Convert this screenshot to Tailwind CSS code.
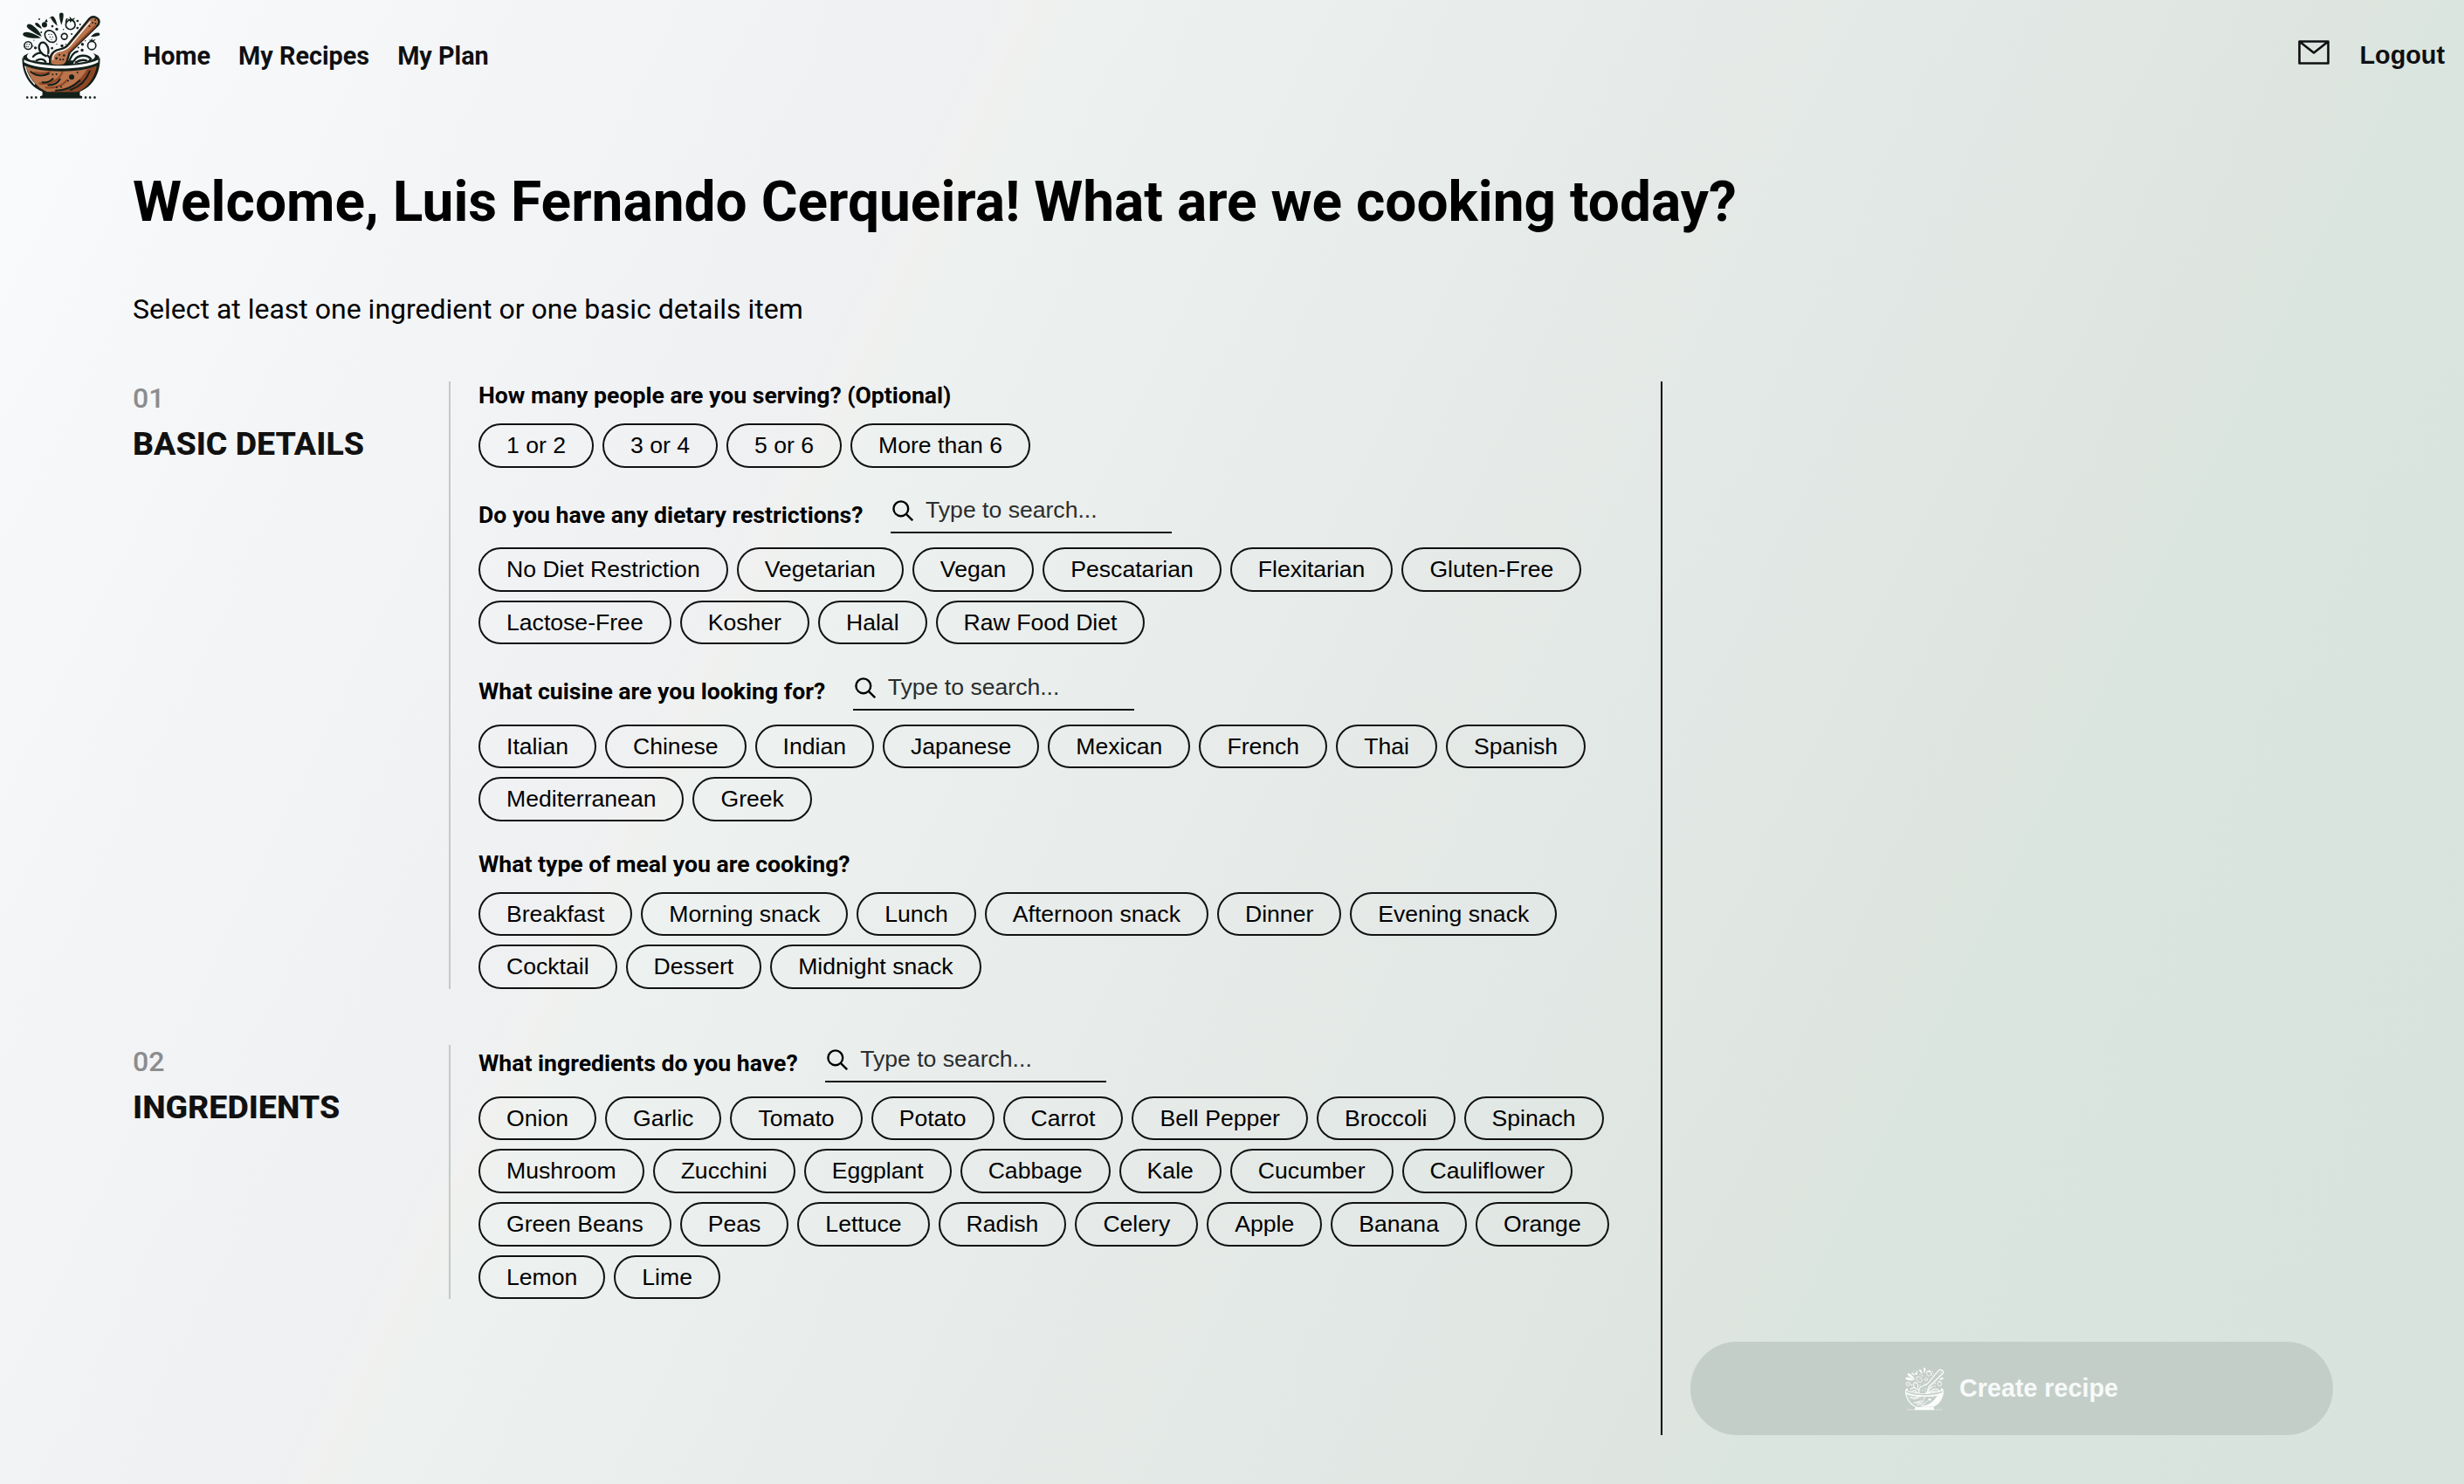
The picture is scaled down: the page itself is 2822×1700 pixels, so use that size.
<!DOCTYPE html>
<html lang="en">
<head>
    <meta charset="utf-8"/>
    <meta content="width=device-width, initial-scale=1" name="viewport"/>
    <title>Recipes | Home</title>
    <script src="https://cdn.jsdelivr.net/npm/@tailwindcss/browser@4"></script>
</head>
<body class="font-['Roboto',sans-serif] text-black">
<!-- bowl artwork, shared by the header and the button -->
<svg class="hidden">
    <symbol id="bowl" viewBox="40 25 280 302">
        <g fill="var(--ink)">
            <!-- splashes -->
            <path d="M174 36c0-9 14-9 14 0 0 13-3 24-7 36-4-12-7-23-7-36z"/>
            <path d="M145 44c4-5 9-2 12 3 6 9 8 17 10 28-9-7-15-14-20-22-2-4-3-6-2-9z"/>
            <path d="M198 50c3-3 5 0 3 4l-6 14c-1-8 0-13 3-18z"/>
            <path d="M91 66c4-4 9-1 15 5 4 4 6 8 8 14-8-4-14-7-19-11-3-3-5-5-4-8z"/>
            <path d="M64 71c5-6 14-2 22 5 13 10 21 20 28 36-17-8-30-15-42-25-7-5-12-11-8-16z"/>
            <path d="M49 103c2-8 14-9 26-5 12 3 25 10 36 18-18 2-33 2-47-2-9-2-16-6-15-11z"/>
            <path d="M282 112c6-9 16-15 25-14 7 1 8 9 0 11-8 3-16 4-25 3z"/>
            <circle cx="123" cy="71" r="9"/>
            <path d="M124 63c0-6 3-10 8-12-1 4 0 7 3 9-3 2-7 3-11 3z"/>
            <!-- dots -->
            <circle cx="105" cy="52" r="3"/><circle cx="150" cy="76" r="4"/><circle cx="165" cy="86" r="5"/>
            <circle cx="142" cy="47" r="2"/><circle cx="236" cy="58" r="4"/><circle cx="245" cy="70" r="3"/><circle cx="236" cy="82" r="4"/>
            <circle cx="188" cy="87" r="2"/><circle cx="112" cy="97" r="3"/><circle cx="216" cy="103" r="3"/>
            <circle cx="87" cy="124" r="2"/><circle cx="92" cy="150" r="5"/><circle cx="84" cy="144" r="2"/>
            <circle cx="149" cy="151" r="4"/><circle cx="165" cy="137" r="2"/><circle cx="183" cy="143" r="5"/>
            <circle cx="196" cy="138" r="2"/><circle cx="253" cy="138" r="5"/><circle cx="252" cy="158" r="5"/>
            <circle cx="239" cy="149" r="3"/><circle cx="263" cy="126" r="2"/><circle cx="240" cy="130" r="2"/>
            <circle cx="64" cy="320" r="4"/><circle cx="79" cy="320" r="4"/><circle cx="94" cy="320" r="4"/>
            <circle cx="264" cy="320" r="4"/><circle cx="279" cy="320" r="4"/><circle cx="295" cy="320" r="4"/>
            <path d="M210 58l-11-8 11 2-1-10 8 9 12-4-7 8 7 5-12-2-6 6z"/>
            <path d="M281 127l-7-4 8 0 4-6 1 7 12-3-8 7z"/>
        </g>
        <!-- fruit and vegetable outlines -->
        <g fill="none" stroke="var(--ink)" stroke-width="5" stroke-linecap="round">
            <circle cx="212" cy="71" r="16"/>
            <path d="M130 93c11-6 25 0 30 12 6 13 5 22-4 25-12 3-24-4-29-14-4-9-4-18 3-23z"/>
            <circle cx="191" cy="111" r="10"/>
            <circle cx="67" cy="142" r="13"/>
            <circle cx="285" cy="142" r="14"/>
        </g>
        <g fill="var(--ink)">
            <circle cx="138" cy="104" r="2"/><circle cx="147" cy="104" r="2"/><circle cx="142" cy="113" r="2"/>
            <circle cx="151" cy="113" r="2"/><circle cx="147" cy="121" r="2"/><circle cx="63" cy="138" r="2"/>
            <circle cx="71" cy="138" r="2"/><circle cx="67" cy="146" r="2"/><circle cx="61" cy="146" r="2"/>
        </g>
        <!-- back of the bowl and its contents -->
        <path fill="var(--ink)" d="M70 168l-16 8c-7 5-5 12 2 18 35 26 213 26 248 0 7-6 9-13 2-18l-17-8c14 12 6 20-9 25H79c-15-5-23-13-9-25z"/>
        <g fill="var(--paper)" stroke="var(--ink)" stroke-width="7" stroke-linecap="round">
            <path d="M84 180c12-16 42-20 58 6v20l-50-6"/>
            <path d="M128 178c-26-12-28-34-18-44 12-10 30 10 26 34"/>
            <path d="M206 202c6-22 14-36 30-40M224 194c14-22 44-22 58-6l-10 12-50 8"/>
            <path d="M95 194c12-8 26-6 32 4M230 200c12-8 26-10 38-6"/>
        </g>
        <!-- spoon -->
        <path fill="var(--wood)" stroke="var(--ink)" stroke-width="7" stroke-linejoin="round" d="M144 208c-8-28 6-48 28-52 14-2 24-6 33-18l72-88c14-14 38 0 32 16l-2 5-94 91c-8 9-8 18-11 28-3 12-10 20-20 20-12 2-28 2-38-2z"/>
        <path fill="none" stroke="var(--paper)" stroke-width="4" stroke-linecap="round" d="M152 190c-1-16 8-26 24-29 16-3 26-8 36-20l67-80"/>
        <path fill="none" stroke="var(--shade)" stroke-width="6" stroke-linecap="round" d="M205 166l92-90"/>
        <g fill="var(--ink)">
            <circle cx="297" cy="54" r="3"/><circle cx="288" cy="64" r="3"/><circle cx="298" cy="67" r="3"/><circle cx="277" cy="76" r="3"/>
            <circle cx="174" cy="174" r="3"/><circle cx="190" cy="176" r="4"/><circle cx="164" cy="186" r="4"/>
            <circle cx="177" cy="190" r="3"/><circle cx="187" cy="190" r="3"/>
        </g>
        <!-- bowl body -->
        <path fill="var(--ink)" d="M47 184c40 34 224 34 266 0 2 52-24 98-69 116v13l8 3v7H108v-7l8-3v-13c-45-18-71-64-69-116z"/>
        <path fill="var(--paper)" d="M53 190c50 28 204 28 254 0v9c-50 29-204 29-254 0z"/>
        <path fill="var(--wood)" d="M60 213c46 23 190 24 240 0-6 40-34 76-66 88H132c-36-14-62-48-72-88z"/>
        <path fill="var(--shade)" d="M302 212c-6 40-34 77-66 88H140c60-4 106-34 128-76z"/>
        <path fill="none" stroke="var(--paper)" stroke-width="4" stroke-linecap="round" d="M57 214c6 26 16 44 32 60"/>
        <g fill="none" stroke="var(--shade)" stroke-width="6" stroke-linecap="round">
            <path d="M88 234c24 6 40 4 54-2M106 272c30 6 66-8 78-38M128 286c30 4 60-8 72-26"/>
        </g>
        <g fill="none" stroke="var(--ink)" stroke-width="6" stroke-linecap="round">
            <path d="M76 232c18 14 38 18 62 6M116 268c14 2 28-4 36-12M136 278c16 0 32-8 40-20M278 230c-12 32-38 54-66 64M162 296c36 0 60-12 82-34"/>
        </g>
        <g fill="var(--ink)">
            <circle cx="216" cy="250" r="9"/><circle cx="151" cy="241" r="3"/><circle cx="164" cy="240" r="3"/>
            <circle cx="204" cy="263" r="3"/><circle cx="165" cy="286" r="3"/><circle cx="180" cy="284" r="3"/><circle cx="236" cy="234" r="3"/>
        </g>
    </symbol>
    <symbol id="search" viewBox="0 0 24 24">
        <g fill="none" stroke="#000" stroke-width="2.4">
            <circle cx="9.8" cy="9.8" r="8.4"/>
            <path d="M15.8 15.8l7.4 7.4"/>
        </g>
    </symbol>
</svg>
<div class="flex h-[1700px] w-[2822px] flex-col overflow-hidden bg-[linear-gradient(116deg,#f9fbfd_0%,#f4f5f7_15%,#eff0f2_31.5%,#f0f1ef_32.5%,#edf1ef_34%,#e7ebe9_50%,#e2e8e5_63%,#dee5e0_74%,#dbe5df_76.5%,#d9e4de_85%,#d9e3dd_100%)]">
    <header class="flex h-32 shrink-0 items-center pr-[22px] pl-[23px] text-[28.8px] font-bold text-[#0f1012]">
        <svg class="mb-0.5 h-[101px] w-[94px] [--ink:#14201a] [--paper:#f9fbfc] [--shade:#8f4525] [--wood:#b9744c]"><use href="#bowl"/></svg>
        <nav class="mt-0.5 ml-[47px] flex gap-8">
            <a>Home</a>
            <a>My Recipes</a>
            <a>My Plan</a>
        </nav>
        <div class="mb-px ml-auto flex items-center gap-[34px] font-['Liberation_Sans',sans-serif]">
            <svg class="mb-[7px] h-7 w-9" viewBox="0 0 36 28" fill="none" stroke="#0f1012" stroke-width="2.6" stroke-linejoin="round">
                <path d="M1.5 1.5h33v25h-33zM1.5 1.5L18 14.5l16.5-13"/>
            </svg>
            <button>Logout</button>
        </div>
    </header>
    <main class="flex grow flex-col px-[150px] pt-[65px] pb-14 pl-[152px]">
        <h1 class="text-[64px] leading-[78px] font-bold">Welcome, Luis Fernando Cerqueira! What are we cooking today?</h1>
        <p class="mt-16 text-[32px] leading-[38px]">Select at least one ingredient or one basic details item</p>
        <div class="mt-16 flex grow">
            <div class="w-[1750px]">
                <section class="flex">
                    <div class="w-[362px]">
                        <p class="text-[32px] leading-[38px] font-medium text-[#8b8c8e]">01</p>
                        <h2 class="mt-2.5 text-[37.5px] leading-[46px] font-extrabold text-[#111]">BASIC DETAILS</h2>
                    </div>
                    <div data-groups="basic" class="flex w-[1356px] flex-col gap-[32.7px] border-l-2 border-[#c3c9c8] pl-8"></div>
                </section>
                <section class="mt-16 flex">
                    <div class="w-[362px]">
                        <p class="text-[32px] leading-[38px] font-medium text-[#8b8c8e]">02</p>
                        <h2 class="mt-2.5 text-[37.5px] leading-[46px] font-extrabold text-[#111]">INGREDIENTS</h2>
                    </div>
                    <div data-groups="ingredients" class="flex w-[1356px] flex-col gap-[32.7px] border-l-2 border-[#c3c9c8] pl-8"></div>
                </section>
            </div>
            <aside class="flex grow flex-col justify-end border-l-2 border-black pl-8">
                <button class="flex h-[107px] w-[736px] items-center justify-center gap-4 rounded-full bg-[#c4cec8] pr-0.5 font-['Liberation_Sans',sans-serif] text-[28.7px] font-bold text-[#f7fafa]">
                    <svg class="h-[50px] w-12 [--ink:#fbfdfd] [--paper:#c4cec8] [--shade:#fbfdfd] [--wood:#c4cec8]"><use href="#bowl"/></svg>
                    Create recipe
                </button>
            </aside>
        </div>
    </main>
</div>
<script>
    const groups = {
        basic: [
            {title: 'How many people are you serving? (Optional)', items: ['1 or 2', '3 or 4', '5 or 6', 'More than 6']},
            {title: 'Do you have any dietary restrictions?', search: true, items: ['No Diet Restriction', 'Vegetarian', 'Vegan', 'Pescatarian', 'Flexitarian', 'Gluten-Free', 'Lactose-Free', 'Kosher', 'Halal', 'Raw Food Diet']},
            {title: 'What cuisine are you looking for?', search: true, items: ['Italian', 'Chinese', 'Indian', 'Japanese', 'Mexican', 'French', 'Thai', 'Spanish', 'Mediterranean', 'Greek']},
            {title: 'What type of meal you are cooking?', items: ['Breakfast', 'Morning snack', 'Lunch', 'Afternoon snack', 'Dinner', 'Evening snack', 'Cocktail', 'Dessert', 'Midnight snack']}
        ],
        ingredients: [
            {title: 'What ingredients do you have?', search: true, items: ['Onion', 'Garlic', 'Tomato', 'Potato', 'Carrot', 'Bell Pepper', 'Broccoli', 'Spinach', 'Mushroom', 'Zucchini', 'Eggplant', 'Cabbage', 'Kale', 'Cucumber', 'Cauliflower', 'Green Beans', 'Peas', 'Lettuce', 'Radish', 'Celery', 'Apple', 'Banana', 'Orange', 'Lemon', 'Lime']}
        ]
    };
    const search = `
        <label class="flex h-[42.67px] w-[322px] border-b-2 border-[#111] pl-0.5 font-['Liberation_Sans',sans-serif] text-[26.6px] leading-[33px] text-[#2a2d2d]">
            <svg class="mt-[5px] mr-3.5 h-6 w-6"><use href="#search"/></svg>
            <span>Type to search...</span>
        </label>`;
    for (const [name, list] of Object.entries(groups)) {
        document.querySelector(`[data-groups=${name}]`).innerHTML = list.map(group => `
            <div>
                <div class="flex items-center gap-[31.5px]">
                    <h3 class="text-[26.6px] leading-8 font-bold">${group.title}</h3>
                    ${group.search ? search : ''}
                </div>
                <div class="mt-4 flex flex-wrap gap-2.5">
                    ${group.items.map(item => `<button class="h-[50.67px] rounded-full border-2 border-[#111] px-[30px] font-['Liberation_Sans',sans-serif] text-[26.6px] leading-[30.67px]">${item}</button>`).join('')}
                </div>
            </div>`).join('');
    }
</script>
</body>
</html>
